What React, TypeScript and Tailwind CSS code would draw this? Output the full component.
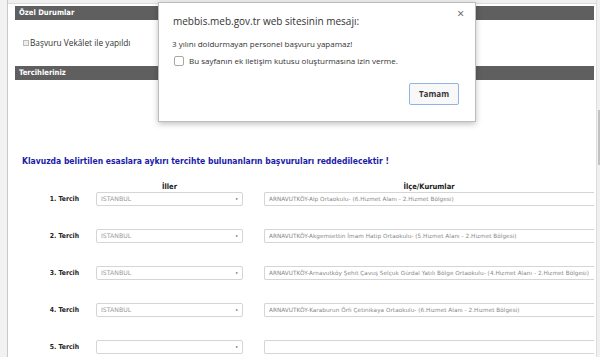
import type React from "react";

const rows = [
	"ARNAVUTKÖY-Alp Ortaokulu- (6.Hizmet Alanı - 2.Hizmet Bölgesi)",
	"ARNAVUTKÖY-Akgemsettin İmam Hatip Ortaokulu- (5.Hizmet Alanı - 2.Hizmet Bölgesi)",
	"ARNAVUTKÖY-Arnavutköy Şehit Çavuş Selçuk Gürdal Yatılı Bölge Ortaokulu- (4.Hizmet Alanı - 2.Hizmet Bölgesi)",
	"ARNAVUTKÖY-Karaburun Örfi Çetinikaya Ortaokulu- (6.Hizmet Alanı - 2.Hizmet Bölgesi)",
	"",
];

const verdana = { fontFamily: '"DejaVu Sans", Verdana, sans-serif' };
const tahoma = { fontFamily: '"DejaVu Sans Condensed", "DejaVu Sans", Tahoma, sans-serif' };

const SectionBar = ({ title }: { title: string }): React.ReactElement => (
	<div
		className="h-[14px] bg-[#5f5f5f] pl-[4px] flex items-center text-[7.6px] font-bold text-white"
		style={tahoma}
	>
		{title}
	</div>
);

const TercihRow = ({ n, kurum }: { n: number; kurum: string }): React.ReactElement => (
	<div className="flex items-center h-[14px]">
		<div className="w-[64px] shrink-0 text-right text-[6.8px] font-bold text-[#222]" style={tahoma}>
			{n}. Tercih
		</div>
		<div className="ml-[17px] w-[147px] shrink-0 h-[14px] border border-[#d5d5d5] rounded-[2px] flex items-center justify-between px-[4px] bg-white">
			<span className="text-[6.2px] text-[#999]" style={verdana}>
				{kurum ? "ISTANBUL" : ""}
			</span>
			<span className="text-[4px] text-[#777]">●</span>
		</div>
		<div className="ml-[21px] flex-1 min-w-0 h-[14px] border border-[#d5d5d5] border-r-0 rounded-l-[2px] flex items-center pl-[4px] bg-white overflow-hidden whitespace-nowrap">
			<span className="text-[5.7px] tracking-[0.05px] text-[#888]" style={verdana}>
				{kurum}
			</span>
		</div>
	</div>
);

export default function App(): React.ReactElement {
	return (
		<div
			className="relative w-[600px] h-[357px] overflow-hidden bg-[#efefef] flex"
			style={{ fontFamily: '"Open Sans", sans-serif' }}
		>
			<div className="w-[8px] shrink-0 bg-[#f2f2f2] border-r border-[#c9c9c9]" />
			<main className="flex-1 min-w-0 mt-[3px] bg-white border-t border-[#dcdcdc] flex flex-col pl-[7px] pr-[2px]">
				<div className="mt-[2px]">
					<SectionBar title="Özel Durumlar" />
				</div>
				<div className="flex items-center h-[14px] mt-[16px] pl-[8px] gap-[1px]">
					<span className="w-[6px] h-[6px] border border-[#bbb] bg-[#eee]" />
					<span className="text-[8.3px] text-[#333]">Başvuru Vekâlet ile yapıldı</span>
				</div>
				<div className="mt-[16px]">
					<SectionBar title="Tercihleriniz" />
				</div>
				<div
					className="mt-[75px] pl-[7px] text-[8.5px] font-bold text-[#1c1ca8] leading-[12px]"
					style={tahoma}
				>
					Klavuzda belirtilen esaslara aykırı tercihte bulunanların başvuruları reddedilecektir !
				</div>
				<div className="flex h-[10px] mt-[15px] text-[7.5px] font-bold text-[#222] leading-[10px]" style={tahoma}>
					<div className="w-[64px] shrink-0" />
					<div className="ml-[17px] w-[147px] shrink-0 text-center">İller</div>
					<div className="ml-[21px] flex-1 text-center">İlçe/Kurumlar</div>
				</div>
				<div className="flex flex-col gap-[23px]">
					{rows.map((k, i) => (
						<TercihRow key={i} n={i + 1} kurum={k} />
					))}
				</div>
			</main>
			<div className="w-[4px] shrink-0 bg-[#f0f0f0] border-l border-[#ddd] relative">
				<div className="absolute left-[1px] top-[110px] w-[2px] h-[55px] bg-[#c2c2c2]" />
			</div>

			<div className="absolute left-[158px] top-[2px] w-[318px] h-[120px] bg-white border border-[#bdbdbd] shadow-[0_2px_6px_rgba(0,0,0,0.25)] flex flex-col">
				<div className="absolute right-[11px] top-[5px] text-[12px] text-[#555] leading-none">×</div>
				<div className="pl-[14px] mt-[11px] text-[10px] text-[#333] leading-[14px]">
					mebbis.meb.gov.tr web sitesinin mesajı:
				</div>
				<div className="pl-[13px] mt-[10px] text-[8px] text-[#333] leading-[11px]">
					3 yılını doldurmayan personel başvuru yapamaz!
				</div>
				<div className="pl-[15px] mt-[7px] flex items-center gap-[5px] h-[10px]">
					<span className="w-[10px] h-[10px] border border-[#a8a8a8] rounded-[2px] bg-white" />
					<span className="text-[8px] text-[#333]">
						Bu sayfanın ek iletişim kutusu oluşturmasına izin verme.
					</span>
				</div>
				<div className="flex justify-end pr-[16px] mt-[17px]">
					<button className="w-[50px] h-[22px] border border-[#8fb4e8] rounded-[2px] bg-[#f8f8f8] text-[8px] font-bold text-[#333]">
						Tamam
					</button>
				</div>
			</div>
		</div>
	);
}
